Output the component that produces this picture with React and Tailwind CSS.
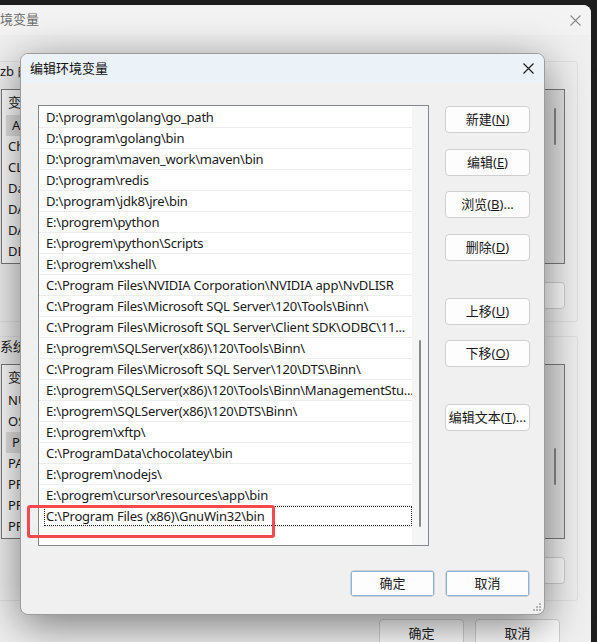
import React from 'react';

const FONT = "font-['Noto_Sans','Noto_Sans_CJK_SC',sans-serif]";

const paths = [
  'D:\\program\\golang\\go_path',
  'D:\\program\\golang\\bin',
  'D:\\program\\maven_work\\maven\\bin',
  'D:\\program\\redis',
  'D:\\program\\jdk8\\jre\\bin',
  'E:\\progrem\\python',
  'E:\\progrem\\python\\Scripts',
  'E:\\progrem\\xshell\\',
  'C:\\Program Files\\NVIDIA Corporation\\NVIDIA app\\NvDLISR',
  'C:\\Program Files\\Microsoft SQL Server\\120\\Tools\\Binn\\',
  'C:\\Program Files\\Microsoft SQL Server\\Client SDK\\ODBC\\11...',
  'E:\\progrem\\SQLServer(x86)\\120\\Tools\\Binn\\',
  'C:\\Program Files\\Microsoft SQL Server\\120\\DTS\\Binn\\',
  'E:\\progrem\\SQLServer(x86)\\120\\Tools\\Binn\\ManagementStu...',
  'E:\\progrem\\SQLServer(x86)\\120\\DTS\\Binn\\',
  'E:\\progrem\\xftp\\',
  'C:\\ProgramData\\chocolatey\\bin',
  'E:\\progrem\\nodejs\\',
  'E:\\progrem\\cursor\\resources\\app\\bin',
];

const userVars = ['ACSvcPort', 'ChocolateyLastPathUpdate', 'CLion', 'DataGrip', 'DATAGRIP_HOME', 'DATASPELL', 'DEVECO'];
const sysVars = ['NUMBER_OF_PROCESSORS', 'OS', 'Path', 'PATHEXT', 'PROCESSOR_ARCHITECTURE', 'PROCESSOR_IDENTIFIER', 'PROCESSOR_LEVEL'];

const CloseIcon = ({ color = '#1a1a1a' }) => (
  <svg width="11" height="11" viewBox="0 0 11 11">
    <path d="M0.5 0.5 L10.5 10.5 M10.5 0.5 L0.5 10.5" stroke={color} strokeWidth="1.1" fill="none" />
  </svg>
);

const Btn = ({ children, className = '' }) => (
  <div className={`w-[85px] h-[27px] flex items-center justify-center rounded-[4px] border border-[#d0d0d0] bg-[#fdfdfd] text-[13px] text-[#1a1a1a] ${className}`}>
    {children}
  </div>
);

// list box of the window behind
const BgList = ({ rows, selected, thumbTop }) => (
  <div className="h-[175px] border border-[#7a7a7a] bg-white flex">
    <div className="flex-1 min-w-0">
      <div className="h-[25px] flex items-center pl-[6px] text-[13px] text-[#1a1a1a]">
        <span className="w-[200px]">变量</span>
        <span>值</span>
      </div>
      {rows.map((r, i) => (
        <div key={r} className={`h-[21px] flex items-center pl-[6px] text-[13px] text-[#1a1a1a] ${i === selected ? 'bg-[#e3e3e3] ml-[4px] pl-[2px]' : ''}`}>
          {r}
        </div>
      ))}
    </div>
    <div className="w-[19px] bg-[#e2e2e2] flex flex-col items-center">
      <div className={`w-[2px] h-[37px] bg-[#888] rounded-full ${thumbTop}`}></div>
    </div>
  </div>
);

const BgGroup = ({ label, rows, selected, thumbTop, className = '' }) => (
  <div className={`border border-[#e2e2e2] rounded-[3px] pl-[12px] pr-[12px] ${className}`}>
    <div className="h-[18px] leading-[18px] -ml-[1px] text-[13px] text-[#1a1a1a]">{label}</div>
    <div className="mt-[9px]">
      <BgList rows={rows} selected={selected} thumbTop={thumbTop} />
    </div>
    <div className="flex justify-end gap-[10px] mt-[18px]">
      <Btn className="h-[26px] bg-[#f2f2f2]">新建(W)...</Btn>
      <Btn className="h-[26px] bg-[#f2f2f2]">编辑(I)...</Btn>
      <Btn className="h-[26px] bg-[#f2f2f2]">删除(L)</Btn>
    </div>
  </div>
);

export default function App() {
  return (
    <div className={`relative w-[597px] h-[642px] overflow-hidden bg-[#1e1e1e] ${FONT}`}>
      {/* window behind */}
      <div className="absolute left-[-40px] top-[5px] w-[631px] h-[700px] rounded-tr-[8px] bg-[#f0f0f0] overflow-hidden">
        <div className="h-[30px] bg-[#f3f3f3] flex items-center justify-between pl-[27px] pr-[10px]">
          <span className="text-[13px] text-[#6e6e6e]">环境变量</span>
          <CloseIcon color="#8a8a8a" />
        </div>
        <div className="pl-[28px] pr-[13px] pt-[26px]">
          <BgGroup label="zb 的用户变量(U)" rows={userVars} selected={0} thumbTop="mt-[18px]" className="pb-[12px]" />
          <BgGroup label="系统变量(S)" rows={sysVars} selected={2} thumbTop="mt-[83px]" className="mt-[14px] pb-[16px]" />
          <div className="flex justify-end gap-[11px] pr-[18px] mt-[18px]">
            <Btn className="h-[30px] bg-[#f2f2f2]">确定</Btn>
            <Btn className="h-[30px] bg-[#f2f2f2]">取消</Btn>
          </div>
        </div>
      </div>

      {/* edit dialog */}
      <div className="absolute left-[20px] top-[53px] w-[525px] h-[562px] rounded-[8px] border border-[#9c9c9c] bg-[#f0f0f0] overflow-hidden shadow-[0_10px_44px_rgba(0,0,0,0.5)]">
        <div className="h-[29px] bg-[#ebf3f8] flex items-center justify-between pl-[9px] pr-[10px]">
          <span className="text-[13px] text-[#111]">编辑环境变量</span>
          <CloseIcon />
        </div>

        <div className="flex pl-[17px] pr-[14px] pt-[22px] gap-[16px]">
          <div className="w-[391px] h-[441px] border border-[#828790] bg-white flex">
            <div className="flex-1 min-w-0 pt-[1px]">
              {paths.map(p => (
                <div key={p} className="h-[21px] pt-[1px] border-b border-[#eeeeee] flex items-center pl-[7px] text-[13px] tracking-[-0.22px] text-[#1a1a1a] whitespace-nowrap overflow-hidden">
                  {p}
                </div>
              ))}
              <div className="h-[21px] border-b border-[#eeeeee] flex items-stretch pl-[5px] text-[13px] tracking-[-0.22px] text-[#1a1a1a] whitespace-nowrap">
                <div className="flex-1 flex items-center pl-[1px] pt-[1px] border border-dotted border-[#222]">
                  C:\Program Files (x86)\GnuWin32\bin
                </div>
              </div>
            </div>
            <div className="w-[16px] bg-[#f5f5f5] flex flex-col items-center pt-[234px]">
              <div className="w-[2px] h-[187px] rounded-full bg-[#8a8a8a]"></div>
            </div>
          </div>

          <div className="flex flex-col">
            <Btn className="mt-[1px]">新建(<u>N</u>)</Btn>
            <Btn className="mt-[16px]">编辑(<u>E</u>)</Btn>
            <Btn className="mt-[15px]">浏览(<u>B</u>)...</Btn>
            <Btn className="mt-[16px]">删除(<u>D</u>)</Btn>
            <Btn className="mt-[37px]">上移(<u>U</u>)</Btn>
            <Btn className="mt-[15px]">下移(<u>O</u>)</Btn>
            <Btn className="mt-[37px]">编辑文本(<u>T</u>)...</Btn>
          </div>
        </div>

        <div className="flex justify-end gap-[10px] pr-[14px] mt-[24px]">
          <Btn className="border-[#0f6cbd] shadow-[inset_0_0_0_0.5px_#0f6cbd]">确定</Btn>
          <Btn className="border-[#0f6cbd] bg-[#e0eef9] shadow-[inset_0_0_0_0.5px_#0f6cbd]">取消</Btn>
        </div>

        {/* red highlight annotation */}
        <div className="absolute left-[6px] top-[451px] w-[248px] h-[33px] border-[3px] border-[#f2484e] rounded-[3px]"></div>

        {/* resize grip */}
        <svg className="absolute right-[3px] bottom-[3px]" width="8" height="8" viewBox="0 0 8 8">
          <rect x="6" y="0" width="2" height="2" fill="#b5b5b5" />
          <rect x="3" y="3" width="2" height="2" fill="#b5b5b5" />
          <rect x="6" y="3" width="2" height="2" fill="#b5b5b5" />
          <rect x="0" y="6" width="2" height="2" fill="#b5b5b5" />
          <rect x="3" y="6" width="2" height="2" fill="#b5b5b5" />
          <rect x="6" y="6" width="2" height="2" fill="#b5b5b5" />
        </svg>
      </div>
    </div>
  );
}
